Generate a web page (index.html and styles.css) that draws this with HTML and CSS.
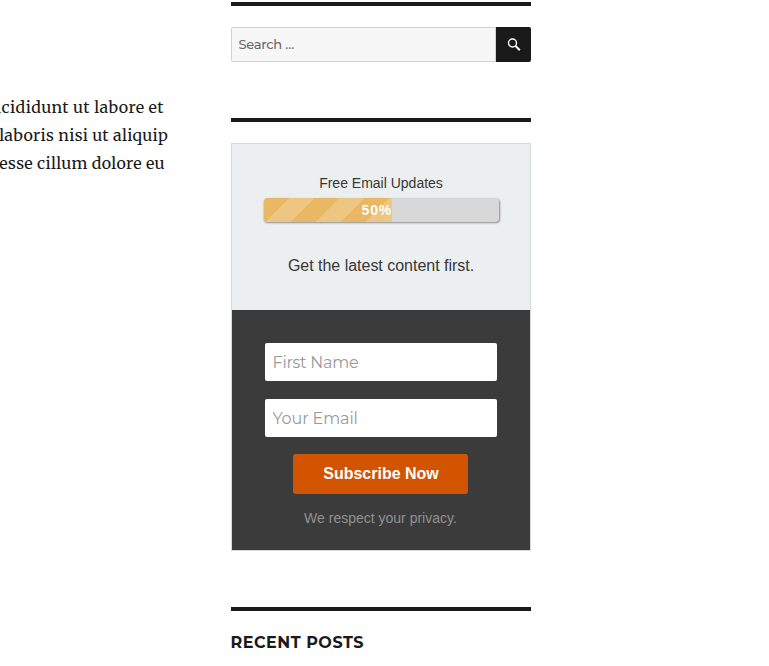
FILE: index.html
```html
<!DOCTYPE html>
<html lang="en">
<head>
<meta charset="utf-8">
<title>Email Updates</title>
<link rel="stylesheet" href="styles.css">
</head>
<body>
<div class="page">
  <main class="content">
    <p class="line"><span class="l1">ncididunt ut labore et</span></p>
    <p class="line"><span class="l2">laboris nisi ut aliquip</span></p>
    <p class="line"><span class="l3">esse cillum dolore eu</span></p>
  </main>
  <aside class="sidebar">
    <section class="widget widget-search">
      <form class="search">
        <input class="search-field" type="text" placeholder="Search …" aria-label="Search">
        <button class="search-submit" type="button" aria-label="Search">
          <svg width="14" height="14" viewBox="0 0 14 14" fill="none" stroke="#fff"><circle cx="5.5" cy="5" r="4" stroke-width="1.4"/><path d="M8.3 7.8 12.8 12.2" stroke-width="2"/></svg>
        </button>
      </form>
    </section>
    <section class="widget widget-optin">
      <div class="optin">
        <div class="optin-head">
          <div class="label"><span>Free Email Updates</span></div>
          <div class="track"><div class="fill">50%</div></div>
          <div class="lead"><span>Get the latest content first.</span></div>
        </div>
        <form class="optin-form">
          <input class="field" type="text" placeholder="First Name" aria-label="First Name">
          <input class="field field-email" type="text" placeholder="Your Email" aria-label="Your Email">
          <button class="subscribe" type="button">Subscribe Now</button>
          <div class="privacy">We respect your privacy.</div>
        </form>
      </div>
    </section>
    <section class="widget">
      <h2 class="title">Recent Posts</h2>
    </section>
  </aside>
</div>
</body>
</html>
```
FILE: styles.css
```css
* { box-sizing: border-box; }
html, body { margin: 0; height: 100%; }
body { background: #fff; color: #1a1a1a; overflow: hidden; }
.page { display: flex; height: 666px; overflow: hidden; }
.content {
  width: 168px;
  margin-right: 63px;
  padding-top: 93px;
  overflow: hidden;
  font: 16px/28px Merriweather, "Noto Serif", "DejaVu Serif", serif;
  letter-spacing: 0.3px;
}
.line { display: flex; justify-content: flex-end; margin: 0; white-space: nowrap; }
.l1 { padding-right: 4px; letter-spacing: 0.4px; }
.l3 { padding-right: 3px; }
.sidebar { width: 300px; padding-top: 2px; }
.widget { border-top: 4px solid #1a1a1a; padding-top: 21px; }
.widget-search { height: 116px; }
.widget-optin { height: 489px; }
.search { display: flex; height: 35px; }
.search-field {
  width: 265px;
  padding: 0 6px 1px 6.5px;
  border: 1px solid #d1d1d1;
  border-radius: 2px 0 0 2px;
  background: #f7f7f7;
  font: 500 13px Montserrat, Inter, sans-serif;
  letter-spacing: -0.25px;
  outline: 0;
}
.search-field::placeholder { color: #686868; opacity: 1; }
.search-submit {
  display: flex;
  width: 35px;
  padding: 11px 0 0 11px;
  border: 0;
  border-radius: 0 2px 2px 0;
  background: #1a1a1a;
}
.optin {
  height: 408px;
  border: 1px solid #d5dad9;
  font-family: Arial, "Liberation Sans", sans-serif;
  text-align: center;
}
.optin-head { height: 166px; padding: 29px 31px 0; background: #ebeff0; color: #373737; }
.label { font-size: 14px; line-height: 20px; }
.track {
  width: 235px;
  height: 24px;
  margin: 5px 0 32px 1px;
  border-radius: 4px;
  background: #d8d8d8;
  box-shadow: 0.5px 1px 2px #8b8e8f;
}
.fill {
  width: 128px;
  height: 24px;
  border-radius: 4px 2px 2px 4px;
  background: repeating-linear-gradient(135deg, #eab765 0 17.68px, #edc684 17.68px 35.36px);
  color: #fff;
  font: bold 14px/25px Arial, "Liberation Sans", sans-serif;
  letter-spacing: 0.8px;
  text-align: right;
}
.lead { font-size: 16px; line-height: 24px; letter-spacing: -0.02px; }
.optin-form { height: 240px; padding-top: 33px; background: #3b3b3b; }
.field {
  display: block;
  width: 232px;
  height: 38px;
  margin: 0 0 18px 33px;
  padding: 0 7.5px;
  border: 0;
  border-radius: 2px;
  background: #fff;
  font: 16px Montserrat, Inter, sans-serif;
  letter-spacing: -0.25px;
  outline: 0;
}
.field::placeholder { color: #999; opacity: 1; }
.field-email { margin-bottom: 17px; letter-spacing: -0.1px; }
.subscribe {
  display: block;
  width: 175px;
  height: 40px;
  margin-left: 61px;
  padding: 0 0 1px 1px;
  border: 0;
  border-radius: 3px;
  background: #d35400;
  color: #fff;
  font: bold 16px Arial, "Liberation Sans", sans-serif;
}
.privacy { margin-top: 14px; padding-right: 1px; color: #919191; font-size: 14px; line-height: 20px; }
.title {
  margin: 0 0 0 -0.5px;
  font: bold 16px/21px Montserrat, Inter, sans-serif;
  letter-spacing: 0.5px;
  text-transform: uppercase;
}
```
